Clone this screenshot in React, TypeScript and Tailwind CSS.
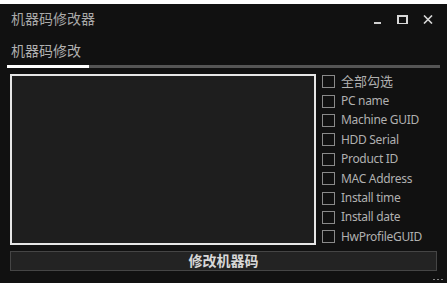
import type { FC } from "react";

const items = [
  "全部勾选",
  "PC name",
  "Machine GUID",
  "HDD Serial",
  "Product ID",
  "MAC Address",
  "Install time",
  "Install date",
  "HwProfileGUID",
];

const CheckRow: FC<{ label: string; cjk?: boolean }> = ({ label, cjk }) => (
  <label className="flex items-center h-[19.4px] gap-[6px]">
    <span className="w-[13px] h-[13px] border border-[#8a8a8a] shrink-0" />
    <span
      className={
        cjk
          ? "text-[13px] leading-none text-[#b0b0b0]"
          : "text-[12px] leading-none text-[#b0b0b0] tracking-[-0.3px]"
      }
    >
      {label}
    </span>
  </label>
);

const App: FC = () => {
  return (
    <div
      className="w-[447px] h-[283px] bg-[#111111] flex flex-col overflow-hidden"
      style={{ fontFamily: '"Noto Sans", "Noto Sans CJK SC", sans-serif' }}
    >
      <div className="h-[4px] bg-white shrink-0" />
      <div className="h-[30px] flex items-center pl-[11px] shrink-0">
        <span className="text-[14px] text-[#a8a8a8] leading-none">机器码修改器</span>
        <div className="ml-auto flex items-center mr-[14px]">
          <div className="w-[7px] h-[2px] bg-[#cfcfcf] mt-[7px] mr-[16px]" />
          <div className="w-[11px] h-[9px] border-x-2 border-t-2 border-b border-[#d8d8d8] mr-[15px]" />
          <svg width="10" height="9" viewBox="0 0 10 9">
            <path d="M1 0.5L9 8.5M9 0.5L1 8.5" stroke="#d8d8d8" strokeWidth="1.6" />
          </svg>
        </div>
      </div>
      <div className="pl-[11px] pt-[4px] h-[31px] shrink-0">
        <span className="text-[14px] text-[#b0b0b0] leading-none">机器码修改</span>
      </div>
      <div className="flex h-[3px] ml-[7px] mr-[7px] shrink-0">
        <div className="w-[82px] h-[3px] bg-white" />
        <div className="flex-1 h-[3px] bg-[#555555]" />
      </div>
      <div className="flex mt-[6px] ml-[10px] gap-[6px] shrink-0">
        <div className="w-[306px] h-[171px] bg-[#1e1e1e] border-2 border-[#e6e6e6]" />
        <div className="flex flex-col -mt-[2px]">
          {items.map((it, i) => (
            <CheckRow key={it} label={it} cjk={i === 0} />
          ))}
        </div>
      </div>
      <button className="mt-[4px] ml-[10px] w-[427px] h-[20px] bg-[#232323] border border-[#454545] flex items-center justify-center shrink-0">
        <span className="text-[14px] font-bold text-[#d8d8d8] leading-none">修改机器码</span>
      </button>
      <div className="flex justify-end gap-[2px] pr-[4px] mt-[8px]">
        <span className="w-[2px] h-[1px] bg-[#888]" />
        <span className="w-[2px] h-[1px] bg-[#888]" />
        <span className="w-[2px] h-[1px] bg-[#888]" />
      </div>
    </div>
  );
};

export default App;
